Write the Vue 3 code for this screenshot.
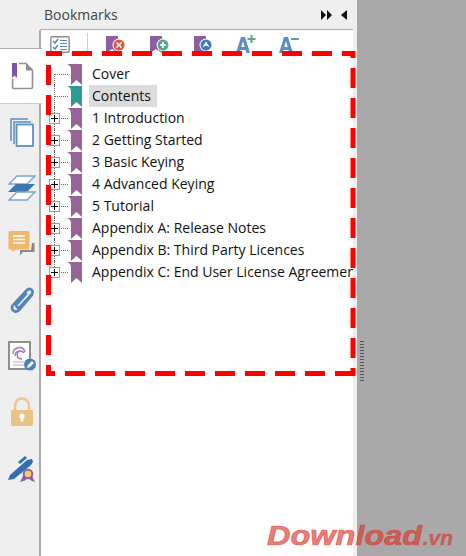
<template>
  <div class="app">
    <aside class="rail">
      <div v-for="(tab, idx) in tabs" :key="tab" class="tab" :class="{ active: idx === 0 }">
        <svg v-if="tab === 'doc'" width="23" height="28" viewBox="0 0 23 28">
          <path d="M2 1.500h13l6.500 7V25q0 1.500-1.500 1.500H3Q1.500 26.500 1.500 25z" fill="#fff" stroke="#8f8f8f" stroke-width="1.600" />
          <path d="M15 1v7.500h7z" fill="#8f8f8f" />
          <path d="M0 0h8v18l-1-1H1l-1 1z" fill="#fff" />
          <path d="M1 1h5v15l-2.500-2.500L1 16z" fill="#7c55a8" />
        </svg>
        <svg v-else-if="tab === 'pages'" width="25" height="30" viewBox="0 0 25 30">
          <path d="M1 1h18v2H3v21H1zM4 4h18v2H6v21H4z" fill="#7ea6cf" />
          <rect x="7.500" y="7.500" width="16.500" height="21.500" fill="#fff" stroke="#5c8fc4" stroke-width="1.800" />
        </svg>
        <svg v-else-if="tab === 'layers'" width="28" height="26" viewBox="0 0 28 26">
          <path d="M9 1h18l-8 8H1z" fill="#fff" stroke="#7aa6d0" stroke-width="1.300" />
          <path d="M8 9h19l-8 8H0z" fill="#3f78b0" />
          <path d="M9 17h18l-8 8H1z" fill="#fff" stroke="#7aa6d0" stroke-width="1.300" />
        </svg>
        <svg v-else-if="tab === 'comment'" width="28" height="26" viewBox="0 0 28 26">
          <path d="M24 12h2.500v9H15l-3 3.500V19h11z" fill="#8a8a8a" />
          <path d="M2 0h18q1.500 0 1.500 1.500V17q0 1.500-1.500 1.500H9L4 21v-2.500H2Q.5 18.500.5 17V1.500Q.5 0 2 0z" fill="#f0b86c" />
          <path d="M5 5h12M5 8.500h12M5 12h12" stroke="#fff" stroke-width="1.400" />
        </svg>
        <svg v-else-if="tab === 'clip'" width="26" height="29" viewBox="0 0 26 29">
          <path d="M23 9 10 24c-4 4-9-1-6-5L18 4c3-3 7 1 5 4L11 21c-2 2-5-1-3-3l9-10" fill="none" stroke="#4f86bd" stroke-width="2.600" stroke-linecap="round" />
        </svg>
        <svg v-else-if="tab === 'sign'" width="28" height="30" viewBox="0 0 28 30">
          <rect x="1" y="1" width="21" height="27" fill="#fff" stroke="#8f8f8f" stroke-width="2" />
          <path d="M5 13c0-7 10-9 12-2M7 15c0-6 7-6 9-3M12 10c-4 1-4 8 2 8" fill="none" stroke="#a878c0" stroke-width="1.500" />
          <path d="M5 21h11M5 24h11" stroke="#b0b0b0" stroke-width="1.200" />
          <circle cx="22" cy="23.500" r="6" fill="#4a80b8" />
          <path d="m19 27 1-3 4-4 2 2-4 4z" fill="#fff" />
        </svg>
        <svg v-else-if="tab === 'lock'" width="24" height="30" viewBox="0 0 24 30">
          <path d="M5 13V9c0-10 14-10 14 0v4" fill="none" stroke="#ecc68c" stroke-width="2.400" />
          <path d="M2 13h20q1 0 1 1v13q0 2-2 2H3q-2 0-2-2V14q0-1 1-1z" fill="#eac384" />
          <circle cx="12" cy="19" r="2.600" fill="#fff" />
          <path d="M10.500 20h3v4.500h-3z" fill="#fff" />
        </svg>
        <svg v-else width="27" height="29" viewBox="0 0 27 29">
          <path d="M0 26 2 21 19 6l5-1 1 3-2 3L6 25z" fill="#2f6fb0" />
          <path d="m10 8 7-6 2 2-7 6z" fill="#2f6fb0" />
          <path d="m15 22-3 6 5-1.500 3-2.500 3 2.500 4 1.500-3-6z" fill="#8c5fa8" />
          <circle cx="20" cy="20" r="4.300" fill="#f0d060" stroke="#8c5fa8" stroke-width="2" />
        </svg>
      </div>
    </aside>

    <main class="panel">
      <header class="panel-head">
        <span class="panel-title">Bookmarks</span>
        <span class="head-arrows">
          <svg width="11" height="10" viewBox="0 0 11 10"><path d="M0 0l5 5-5 5zM6 0l5 5-5 5z" fill="#111" /></svg>
          <svg width="7" height="10" viewBox="0 0 7 10"><path d="M6 0v10L0 5z" fill="#111" /></svg>
        </span>
      </header>

      <div class="panel-body">
        <div class="toolbar">
          <svg class="tool check" width="20" height="17" viewBox="0 0 20 17">
            <rect x=".8" y=".8" width="18.400" height="15.400" rx="1.500" fill="#fff" stroke="#8a8a8a" stroke-width="1.400" />
            <path d="m3 5 2 2 3-4M3 11l2 2 3-4" fill="none" stroke="#4f8cc4" stroke-width="1.500" />
            <path d="M10 4.500h7M10 7.500h7M10 10.500h7M10 13.500h7" stroke="#5a85b0" stroke-width="1.200" />
          </svg>
          <span class="tool-sep"></span>
          <svg class="tool first" width="20" height="20" viewBox="0 0 20 20">
            <path d="M0 1h12v17l-6-4-6 4z" fill="#8b5da3" />
            <circle cx="13" cy="10" r="6.500" fill="#fff" />
            <circle cx="13" cy="10" r="5.500" fill="#d9573f" />
            <path d="m10.500 7.500 5 5m0-5-5 5" stroke="#fff" stroke-width="1.500" />
          </svg>
          <svg class="tool" width="20" height="20" viewBox="0 0 20 20">
            <path d="M0 1h12v17l-6-4-6 4z" fill="#8b5da3" />
            <circle cx="13" cy="10" r="6.500" fill="#fff" />
            <circle cx="13" cy="10" r="5.500" fill="#5ba58c" />
            <path d="M10 10h6M13 7v6" stroke="#fff" stroke-width="1.500" />
          </svg>
          <svg class="tool a-gap" width="20" height="20" viewBox="0 0 20 20">
            <path d="M0 1h12v17H0z" fill="#8b5da3" />
            <circle cx="12" cy="10" r="6.500" fill="#fff" />
            <circle cx="12" cy="10" r="5.500" fill="#3f7cb6" />
            <path d="m12 6.500 3.500 5.500-3.500-1.500L8.500 12z" fill="#fff" />
          </svg>
          <svg class="tool a-gap font-up" width="21" height="20" viewBox="0 0 21 20">
            <path d="M0 18 5 2h4l5 16h-3.500l-1-3H4.500l-1 3zM5.300 12h3.400L7 6z" fill="#5b8fc2" />
            <path d="M11.500 4h8M15.500 0v8" stroke="#5ba58c" stroke-width="2" />
          </svg>
          <svg class="tool" width="21" height="20" viewBox="0 0 21 20">
            <path d="M0 18 5 2h4l5 16h-3.500l-1-3H4.500l-1 3zM5.300 12h3.400L7 6z" fill="#5b8fc2" />
            <path d="M12 4h8" stroke="#5ba58c" stroke-width="2" />
          </svg>
        </div>

        <ul class="tree">
          <li v-for="(item, idx) in bookmarks" :key="item.label" class="tree-row">
            <span class="tree-guide" :class="{ first: idx === 0, last: idx === bookmarks.length - 1 }"></span>
            <span v-if="item.children" class="expander"></span>
            <svg class="mark" width="15" height="21" viewBox="0 0 15 21">
              <path d="M0 0h15v21l-5.500-5L4 21V5C4 2 2 1 0 0z" :fill="item.selected ? '#2f9a95' : '#966496'" />
            </svg>
            <span class="label" :class="{ selected: item.selected }">{{ item.label }}</span>
          </li>
        </ul>
      </div>
    </main>

    <div class="strip"></div>
    <div class="backdrop"><span class="grip"></span></div>

    <svg class="dashes" width="466" height="556">
      <g stroke="#ff0000" stroke-width="5" fill="none" stroke-dasharray="20 10">
        <path d="M46 53.500H355" stroke-dashoffset="4" />
        <path d="M48.500 51V376" stroke-dashoffset="16" />
        <path d="M46 373.500H355" stroke-dashoffset="11" />
        <path d="M353 51V376" stroke-dashoffset="13" />
      </g>
    </svg>

    <div class="watermark"><span class="brand">Download</span><span class="tld">.vn</span></div>
  </div>
</template>

<script setup>
const tabs = ['doc', 'pages', 'layers', 'comment', 'clip', 'sign', 'lock', 'pen']

const bookmarks = [
  { label: 'Cover' },
  { label: 'Contents', selected: true },
  { label: '1 Introduction', children: true },
  { label: '2 Getting Started', children: true },
  { label: '3 Basic Keying', children: true },
  { label: '4 Advanced Keying', children: true },
  { label: '5 Tutorial', children: true },
  { label: 'Appendix A: Release Notes', children: true },
  { label: 'Appendix B: Third Party Licences', children: true },
  { label: 'Appendix C: End User License Agreement', children: true }
]
</script>

<style>
html,
body {
  margin: 0;
  overflow: hidden;
}
</style>

<style scoped>
.app {
  position: relative;
  display: flex;
  width: 466px;
  height: 556px;
  overflow: hidden;
  font-family: "Open Sans", "Noto Sans", sans-serif;
  background: #fff;
}
.rail {
  flex: none;
  width: 40px;
  padding-top: 48px;
  box-sizing: border-box;
  background: #efefef;
}
.tab {
  position: relative;
  display: flex;
  align-items: center;
  justify-content: center;
  width: 40px;
  height: 56px;
  padding-left: 3px;
  box-sizing: border-box;
}
.tab.active {
  width: 42px;
  background: #fff;
  border-top: 1px solid #aaa;
  border-bottom: 1px solid #ccc;
  z-index: 1;
}
.panel {
  flex: none;
  display: flex;
  flex-direction: column;
  width: 313px;
  height: 556px;
}
.panel-head {
  flex: none;
  display: flex;
  align-items: center;
  justify-content: space-between;
  height: 29px;
  padding: 0 5px 0 4px;
  background: #efefef;
  border-bottom: 1px solid #aaa;
}
.panel-title {
  font-size: 14px;
  color: #444;
}
.head-arrows {
  display: flex;
  gap: 9px;
  align-items: center;
}
.panel-body {
  flex: 1;
  overflow: hidden;
  border-left: 2px solid #aaa;
  margin-left: -1px;
  padding-left: 1px;
}
.toolbar {
  display: flex;
  align-items: flex-start;
  height: 33px;
  padding: 5px 0 0 8px;
  box-sizing: border-box;
}
.tool {
  flex: none;
  margin-right: 24px;
}
.tool.check {
  margin-top: 1px;
  margin-right: 17px;
}
.tool.first {
  margin-left: 18px;
}
.tool.a-gap {
  margin-right: 22px;
}
.tool-sep {
  flex: none;
  width: 1px;
  height: 22px;
  margin-top: -2px;
  background: #ccc;
}
.tool.font-up {
  margin-right: 22px;
}
.tree {
  margin: 0;
  padding: 0;
  list-style: none;
}
.tree-row {
  position: relative;
  display: flex;
  align-items: center;
  height: 22px;
  padding-left: 25px;
}
.tree-guide {
  position: absolute;
  left: 12px;
  top: 0;
  bottom: 0;
  width: 13px;
  border-left: 1px dotted #666;
  background: linear-gradient(90deg, #666 50%, transparent 50%) 0 11px / 2px 1px repeat-x;
}
.tree-guide.first {
  top: 11px;
  background-position: 0 0;
}
.tree-guide.last {
  bottom: 10px;
}
.expander {
  position: absolute;
  left: 7px;
  top: 6px;
  width: 9px;
  height: 9px;
  border: 1px solid #999;
  background:
    linear-gradient(#000, #000) center / 7px 1px no-repeat,
    linear-gradient(#000, #000) center / 1px 7px no-repeat,
    #fff;
}
.mark {
  flex: none;
  z-index: 1;
}
.label {
  margin-left: 7px;
  padding: 0 6px 0 3px;
  line-height: 22px;
  font-size: 14px;
  color: #111;
  white-space: nowrap;
}
.label.selected {
  background: #dcdcdc;
}
.strip {
  flex: none;
  width: 4px;
  background: #efefef;
}
.backdrop {
  flex: 1;
  background: #a9a9a9;
}
.grip {
  display: block;
  width: 4px;
  height: 43px;
  margin: 340px 0 0 3px;
  background: radial-gradient(circle, #555 0.7px, transparent 0.9px) 0 0 / 2px 3px;
}
.dashes {
  position: absolute;
  left: 0;
  top: 0;
  z-index: 2;
  pointer-events: none;
}
.watermark {
  position: absolute;
  left: 267px;
  top: 520px;
  z-index: 3;
  display: flex;
  align-items: baseline;
  font-family: "Liberation Sans", sans-serif;
  font-size: 28px;
  font-weight: 700;
  font-style: italic;
  color: rgba(218, 52, 44, 0.65);
  white-space: nowrap;
}
.brand {
  display: inline-block;
  margin-right: 22px;
  transform: scaleX(1.16);
  transform-origin: left;
  -webkit-text-stroke: 0.7px rgba(218, 52, 44, 0.65);
}
.tld {
  font-size: 21px;
  -webkit-text-stroke: 0.4px rgba(218, 52, 44, 0.65);
}
</style>
